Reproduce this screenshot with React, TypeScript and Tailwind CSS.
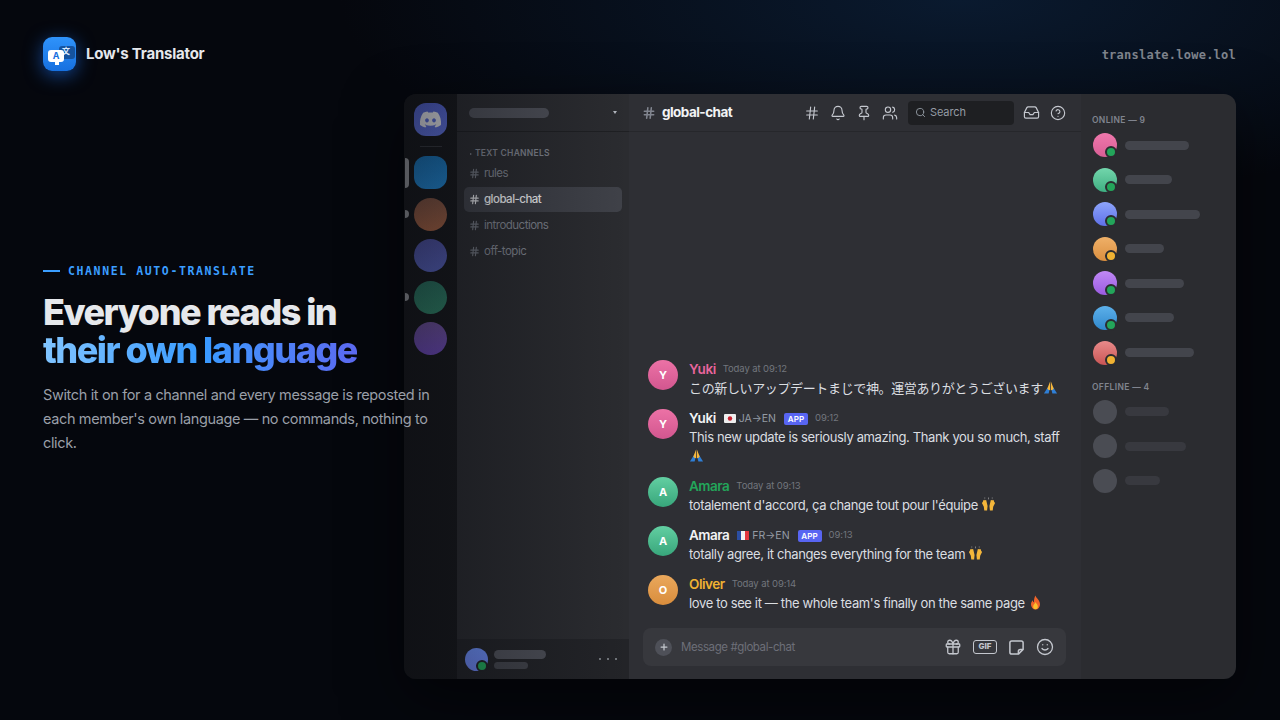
import { ReactNode } from 'react';
import { Bell, CircleHelp, Gift, Hash, Inbox, Pin, Plus, Search, Smile, Users } from 'lucide-react';
import { FaDiscord } from 'react-icons/fa';

const sans = "font-['Inter','Noto_Sans_CJK_JP',sans-serif]";

function Pray() {
  return (
    <svg viewBox="0 0 16 16" className="inline-block w-[15px] h-[15px] align-[-2px]">
      <path d="M1 14.500 5 8l2 2-1 4.500z" fill="#2f7fd6" />
      <path d="M15 14.500 11 8 9 10l1 4.500z" fill="#2f7fd6" />
      <path d="M7.600 1.500 7.600 11 5.600 10.500 4.600 9z" fill="#f6b73c" />
      <path d="M8.400 1.500 8.400 11 10.400 10.500 11.400 9z" fill="#f6b73c" />
    </svg>
  );
}

function Hands() {
  return (
    <svg viewBox="0 0 16 16" className="inline-block w-[15px] h-[15px] align-[-2px]">
      <path d="M1 6.500 2 5l.5-1.800 1 .5.500-.8.700.6.800-.2.700 2.700L7 9.500 6.500 14.500H3.500L3 10.500z" fill="#f4b63a" />
      <path d="M15 6.500 14 5l-.5-1.800-1 .5-.5-.8-.7.6-.8-.2-.7 2.700L9 9.500l.5 5h3l.5-4z" fill="#f4b63a" />
      <path d="M4 .5v1.200M8 .5v2M12 .5v1.200" stroke="#bdbdbd" strokeWidth=".6" />
    </svg>
  );
}

function Fire() {
  return (
    <svg viewBox="0 0 16 16" className="inline-block w-[15px] h-[15px] align-[-2px]">
      <path d="M8 .5c.6 3 4.800 4.700 4.800 9.300A4.800 5.500 0 0 1 8 15.500a4.800 5.500 0 0 1-4.800-5.700c0-2 1-3.300 2-4.300 0 1.300.5 2 1.200 2.300C6.200 5 6.800 2.500 8 .5z" fill="#f0642a" />
      <path d="M8 7.500c.4 1.500 2.500 2.600 2.500 4.800A2.500 3 0 0 1 8 15.200a2.500 3 0 0 1-2.500-2.900C5.500 10.500 7.400 9.500 8 7.500z" fill="#fbc02d" />
    </svg>
  );
}

function FlagJp() {
  return (
    <svg viewBox="0 0 12 9" className="w-[12px] h-[9px]">
      <rect width="12" height="9" rx="1" fill="#eeeeee" />
      <circle cx="6" cy="4.500" r="2.200" fill="#c8202f" />
    </svg>
  );
}

function FlagFr() {
  return (
    <svg viewBox="0 0 12 9" className="w-[12px] h-[9px]">
      <rect width="4" height="9" fill="#2b4ea2" />
      <rect x="4" width="4" height="9" fill="#f2f2f2" />
      <rect x="8" width="4" height="9" fill="#e2383f" />
    </svg>
  );
}

function Sticker() {
  return (
    <svg viewBox="0 0 18 18" fill="none" stroke="currentColor" strokeWidth="1.600" strokeLinejoin="round" className="w-[17px] h-[17px]">
      <path d="M4 2h10a2 2 0 0 1 2 2v7l-5 5H4a2 2 0 0 1-2-2V4a2 2 0 0 1 2-2z" />
      <path d="M11 16v-3a2 2 0 0 1 2-2h3" />
    </svg>
  );
}

function AppLogo() {
  return (
    <div className="relative w-[33px] h-[34px] rounded-[9px] bg-gradient-to-b from-[#2f93fb] to-[#1670e0] shadow-[0_4px_18px_rgba(30,120,255,0.55)] overflow-hidden">
      <div className="absolute left-[16px] top-[9px] w-[16px] h-[13px] rounded-[3px] bg-[#15539f] pl-[3px] text-[8px] leading-[10px] font-bold text-[#dcebff] font-['Noto_Sans_CJK_JP',sans-serif]">
        文
      </div>
      <div className="absolute left-[5px] top-[13px] w-[16px] h-[12px] rounded-[3px] bg-white text-[9px] leading-[12px] text-center font-bold text-[#1670e0]">
        A
      </div>
      <div className="absolute left-[12px] top-[24px] w-[4px] h-[4px] bg-white" />
    </div>
  );
}

function Status({ color, ring = 'border-[#2b2c30]' }: { color: string; ring?: string }) {
  return <span className={`absolute right-0 -bottom-[1px] w-[12px] h-[12px] rounded-full border-2 ${ring} ${color}`} />;
}

const rail = [
  'rounded-xl bg-gradient-to-b from-[#1a72b4] to-[#2386d0]',
  'rounded-full bg-gradient-to-b from-[#7e5241] to-[#a46243]',
  'rounded-full bg-gradient-to-b from-[#4d519e] to-[#5661b8]',
  'rounded-full bg-gradient-to-b from-[#2a705e] to-[#318367]',
  'rounded-full bg-gradient-to-b from-[#6d5198] to-[#6f4bbc]',
];

function ServerRail() {
  return (
    <div className="relative w-[53px] shrink-0 bg-[#18191c] flex flex-col items-center pt-[9px]">
      <div className="w-[33px] h-[33px] rounded-xl bg-gradient-to-b from-[#5262ca] to-[#5f71d8] flex items-center justify-center">
        <FaDiscord className="w-[23px] h-[23px] text-[#e2e3e8]" />
      </div>
      <div className="w-[22px] h-px bg-[#35373c] mt-[10px] mb-[9px]" />
      <div className="flex flex-col gap-[8.500px]">
        {rail.map((c, i) => (
          <div key={i} className={`w-[33px] h-[33px] ${c}`} />
        ))}
      </div>
      <span className="absolute left-px top-[64px] w-[4px] h-[30px] rounded-r bg-[#989a9e]" />
      <span className="absolute left-px top-[116px] w-[4px] h-[8px] rounded-r-full bg-[#989a9e]" />
      <span className="absolute left-px top-[199px] w-[4px] h-[8px] rounded-r-full bg-[#989a9e]" />
    </div>
  );
}

function Channel({ name, active }: { name: string; active?: boolean }) {
  return (
    <div className={`h-[25px] mx-[7px] pl-[5px] rounded-[5px] flex items-center gap-[3px] text-[11.500px] tracking-[-0.045em] ${active ? 'bg-[#404249] text-[#f2f3f5] font-medium' : 'text-[#80848e]'}`}>
      <Hash className={`w-[11px] h-[11px] ${active ? 'text-[#e0e1e5]' : 'text-[#70747d]'}`} strokeWidth={2.500} />
      <span className="ml-[1px]">{name}</span>
    </div>
  );
}

function Sidebar() {
  return (
    <div className="w-[172px] shrink-0 bg-[#2b2c30] flex flex-col">
      <div className="h-[38px] shrink-0 border-b border-[#1f2023] flex items-center justify-between pl-[12px] pr-[12px]">
        <div className="w-[80px] h-[10px] rounded-full bg-[#4e5058]" />
        <span className="w-0 h-0 border-x-[2px] border-t-[3px] border-x-transparent border-t-[#b5bac1]" />
      </div>
      <div className="flex items-center gap-[3px] pl-[13px] mt-[16px] mb-[2px] text-[8.500px] leading-[11px] font-semibold tracking-[0.03em] text-[#80848e]">
        <span className="w-0 h-0 border-y-[1.500px] border-l-[2px] border-y-transparent border-l-[#80848e]" />
        TEXT CHANNELS
      </div>
      <div className="flex flex-col gap-px">
        <Channel name="rules" />
        <Channel name="global-chat" active />
        <Channel name="introductions" />
        <Channel name="off-topic" />
      </div>
      <div className="mt-auto h-[40px] bg-[#232428] flex items-center pl-[8px] pr-[12px]">
        <div className="relative w-[23px] h-[23px] rounded-full bg-gradient-to-b from-[#6a8cf0] to-[#6a80e8]">
          <Status color="bg-[#23a55a]" ring="border-[#232428]" />
        </div>
        <div className="ml-[6px] flex flex-col gap-[3px]">
          <div className="w-[52px] h-[9px] rounded-full bg-[#4e5058]" />
          <div className="w-[34px] h-[7px] rounded-full bg-[#43454c]" />
        </div>
        <div className="ml-auto flex gap-[6px]">
          <span className="w-[2px] h-[2px] rounded-full bg-[#8e9297]" />
          <span className="w-[2px] h-[2px] rounded-full bg-[#8e9297]" />
          <span className="w-[2px] h-[2px] rounded-full bg-[#8e9297]" />
        </div>
      </div>
    </div>
  );
}

function ChatHeader() {
  return (
    <div className="h-[38px] shrink-0 border-b border-[#26272b] flex items-center pl-[13px] pr-[15px] text-[#c4c7ce]">
      <Hash className="w-[14px] h-[14px] text-[#80848e]" strokeWidth={2.700} />
      <span className="ml-[6px] text-[13.500px] font-bold tracking-[-0.04em] text-[#f2f3f5]">global-chat</span>
      <div className="ml-auto flex items-center gap-[10px]">
        <Hash className="w-[16px] h-[16px]" strokeWidth={1.700} />
        <Bell className="w-[16px] h-[16px]" strokeWidth={1.700} />
        <Pin className="w-[16px] h-[16px]" strokeWidth={1.700} />
        <Users className="w-[16px] h-[16px]" strokeWidth={1.700} />
        <div className="w-[106px] h-[24px] rounded-[4px] bg-[#1e1f22] flex items-center pl-[7px] gap-[4px] text-[11px] tracking-[-0.01em] text-[#949ba4]">
          <Search className="w-[11px] h-[11px]" strokeWidth={2} />
          Search
        </div>
        <Inbox className="w-[17px] h-[17px] -ml-[1px]" strokeWidth={1.700} />
        <CircleHelp className="w-[16px] h-[16px]" strokeWidth={1.700} />
      </div>
    </div>
  );
}

function Message({
  initial,
  avatar,
  name,
  nameColor,
  time,
  meta,
  children,
}: {
  initial: string;
  avatar: string;
  name: string;
  nameColor: string;
  time: string;
  meta?: ReactNode;
  children: ReactNode;
}) {
  return (
    <div className="flex gap-[11px]">
      <div className={`w-[30px] h-[30px] shrink-0 rounded-full flex items-center justify-center text-[11px] font-bold text-white ${avatar}`}>
        {initial}
      </div>
      <div className="min-w-0 flex-1">
        <div className="h-[19px] flex items-center gap-[5px]">
          <span className={`text-[13.500px] font-semibold tracking-[-0.035em] ${nameColor}`}>{name}</span>
          {meta}
          <span className="ml-[2px] text-[9.500px] tracking-[-0.01em] text-[#72767d]">{time}</span>
        </div>
        <div className="text-[13px] leading-[19px] tracking-[-0.028em] text-[#dbdee1]">{children}</div>
      </div>
    </div>
  );
}

function Translated({ flag, label }: { flag: ReactNode; label: string }) {
  return (
    <>
      <span className="ml-[3px] flex items-center gap-[3px] text-[10.500px] text-[#949ba4]">
        {flag}
        {label}
      </span>
      <span className="ml-[3px] h-[12px] w-[24px] rounded-[2px] bg-[#5865f2] text-white text-[8px] leading-[12px] text-center font-semibold tracking-[0.02em]">
        APP
      </span>
    </>
  );
}

const pink = 'bg-gradient-to-b from-[#ec72a6] to-[#d2568f]';
const green = 'bg-gradient-to-b from-[#62cfa2] to-[#37a67b]';
const orange = 'bg-gradient-to-b from-[#eaa85c] to-[#d98d3c]';

function ChatArea() {
  return (
    <div className="flex-1 min-w-0 bg-[#2e2f34] flex flex-col">
      <ChatHeader />
      <div className="flex-1 flex flex-col justify-end gap-[11px] pl-[19px] pr-[18px] pb-[15px]">
        <Message initial="Y" avatar={pink} name="Yuki" nameColor="text-[#e8659d]" time="Today at 09:12">
          この新しいアップデートまじで神。運営ありがとうございます
          <Pray />
        </Message>
        <Message initial="Y" avatar={pink} name="Yuki" nameColor="text-[#f2f3f5]" time="09:12" meta={<Translated flag={<FlagJp />} label="JA→EN" />}>
          This new update is seriously amazing. Thank you so much, staff <Pray />
        </Message>
        <Message initial="A" avatar={green} name="Amara" nameColor="text-[#23a55a]" time="Today at 09:13">
          totalement d'accord, ça change tout pour l'équipe <Hands />
        </Message>
        <Message initial="A" avatar={green} name="Amara" nameColor="text-[#f2f3f5]" time="09:13" meta={<Translated flag={<FlagFr />} label="FR→EN" />}>
          totally agree, it changes everything for the team <Hands />
        </Message>
        <Message initial="O" avatar={orange} name="Oliver" nameColor="text-[#f0b232]" time="Today at 09:14">
          love to see it — the whole team's finally on the same page <Fire />
        </Message>
      </div>
      <div className="ml-[14px] mr-[15px] mb-[13px] h-[38px] rounded-[8px] bg-[#37383d] flex items-center pl-[12px] pr-[12px] text-[#c4c7ce]">
        <div className="w-[17px] h-[17px] rounded-full bg-[#4e5058] flex items-center justify-center">
          <Plus className="w-[10px] h-[10px] text-[#c4c7ce]" strokeWidth={3} />
        </div>
        <span className="ml-[9px] mt-px text-[11.500px] tracking-[-0.035em] text-[#6d6f78]">Message #global-chat</span>
        <div className="ml-auto flex items-center gap-[11px]">
          <Gift className="w-[18px] h-[18px]" strokeWidth={1.700} />
          <span className="w-[24px] h-[14px] rounded-[3px] border-[1.500px] border-[#c4c7ce] text-[8px] leading-[11px] text-center font-extrabold">GIF</span>
          <Sticker />
          <Smile className="w-[18px] h-[18px]" strokeWidth={1.700} />
        </div>
      </div>
    </div>
  );
}

const online = [
  { c: 'from-[#ef78ac] to-[#d85e95]', s: 'bg-[#23a55a]', w: 'w-[64px]' },
  { c: 'from-[#72d6ac] to-[#3eaf82]', s: 'bg-[#23a55a]', w: 'w-[47px]' },
  { c: 'from-[#8ea4fa] to-[#5f70e8]', s: 'bg-[#23a55a]', w: 'w-[75px]' },
  { c: 'from-[#efb068] to-[#db8f3e]', s: 'bg-[#f0b232]', w: 'w-[39px]' },
  { c: 'from-[#c088f5] to-[#9a5be0]', s: 'bg-[#23a55a]', w: 'w-[59px]' },
  { c: 'from-[#5cb0ea] to-[#2f88cc]', s: 'bg-[#23a55a]', w: 'w-[49px]' },
  { c: 'from-[#e88a8a] to-[#c95555]', s: 'bg-[#f0b232]', w: 'w-[69px]' },
];

const offline = ['w-[44px]', 'w-[61px]', 'w-[35px]'];

function MembersPanel() {
  return (
    <div className="w-[155px] shrink-0 bg-[#2b2c30] pl-[12px] pt-[21px]">
      <div className="-ml-px text-[8.500px] leading-[11px] font-semibold tracking-[0.04em] text-[#80848e]">ONLINE — 9</div>
      <div className="mt-[7px] flex flex-col gap-[10.600px]">
        {online.map((m, i) => (
          <div key={i} className="flex items-center gap-[8px]">
            <div className={`relative w-[24px] h-[24px] rounded-full bg-gradient-to-b ${m.c}`}>
              <Status color={m.s} />
            </div>
            <div className={`h-[9px] rounded-full bg-[#43454c] ${m.w}`} />
          </div>
        ))}
      </div>
      <div className="-ml-px mt-[17px] text-[8.500px] leading-[11px] font-semibold tracking-[0.04em] text-[#80848e]">OFFLINE — 4</div>
      <div className="mt-[7px] flex flex-col gap-[10.600px]">
        {offline.map((w, i) => (
          <div key={i} className="flex items-center gap-[8px]">
            <div className="w-[24px] h-[24px] rounded-full bg-[#4a4c53]" />
            <div className={`h-[9px] rounded-full bg-[#38393f] ${w}`} />
          </div>
        ))}
      </div>
    </div>
  );
}

export default function App() {
  return (
    <div className={`relative w-[1280px] h-[720px] overflow-hidden bg-[#05070d] ${sans} bg-[radial-gradient(ellipse_620px_200px_at_960px_0px,#0a1a2f,transparent)]`}>
      <header className="h-[94px] flex items-start justify-between pl-[43px] pr-[44px] pt-[37px]">
        <div className="flex items-center gap-[10px]">
          <AppLogo />
          <span className="text-[15px] font-bold tracking-[-0.015em] text-[#e6e8ec]">Low's Translator</span>
        </div>
        <span className="mt-[9px] font-['DejaVu_Sans_Mono',monospace] text-[12px] leading-[18px] font-bold tracking-[0.02em] text-[#7f848d]">translate.lowe.lol</span>
      </header>

      <div className="relative ml-[404px] w-[832px] h-[585px] rounded-[12px] overflow-hidden flex shadow-[0_20px_60px_rgba(0,0,0,0.5)]">
        <ServerRail />
        <Sidebar />
        <ChatArea />
        <MembersPanel />
        <div className="absolute inset-y-0 left-0 w-[225px] bg-gradient-to-r from-[#05070d]/45 to-transparent" />
      </div>

      <section className="absolute left-[43px] top-[263px] w-[392px]">
        <div className="flex items-center gap-[8px] font-['DejaVu_Sans_Mono',monospace] text-[11.500px] leading-[16px] font-bold tracking-[0.14em] text-[#3b9eff]">
          <span className="w-[17px] h-[2px] bg-[#3b9eff]" />
          CHANNEL AUTO-TRANSLATE
        </div>
        <h1 className="mt-[14px] text-[36px] leading-[38px] font-extrabold tracking-[-0.042em] text-[#e6e8ec]">
          Everyone reads in
          <br />
          <span className="bg-gradient-to-r from-[#80c4ff] via-[#379bff] to-[#5a68f0] bg-clip-text text-transparent">their own language</span>
        </h1>
        <p className="mt-[14px] text-[14.500px] leading-[24px] tracking-[-0.025em] text-[#9a9fa8]">
          Switch it on for a channel and every message is reposted in each member's own language — no commands, nothing to click.
        </p>
      </section>
    </div>
  );
}
